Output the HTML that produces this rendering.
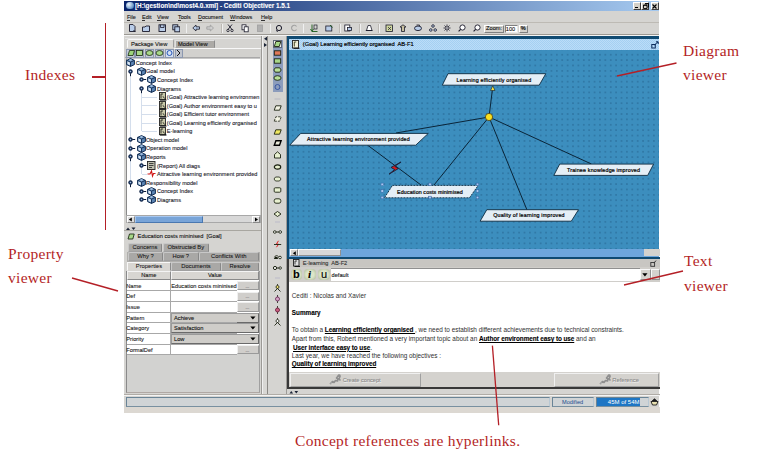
<!DOCTYPE html>
<html><head><meta charset="utf-8"><style>
html,body{margin:0;padding:0;background:#fff;}
body{width:765px;height:460px;overflow:hidden;position:relative;font-family:"Liberation Sans",sans-serif;}
.a{position:absolute;box-sizing:border-box;}
.ann{position:absolute;font-family:"Liberation Serif",serif;color:#b41f26;font-size:15.5px;line-height:16px;letter-spacing:0.3px;white-space:nowrap;}
.t{position:absolute;white-space:nowrap;color:#111;-webkit-text-stroke:0.1px currentColor;}
.r{border:1px solid;border-color:#fff #808080 #808080 #fff;}
.s{border:1px solid;border-color:#808080 #fff #fff #808080;}
</style></head><body>
<div class="a" style="left:124px;top:1px;width:535px;height:412px;background:#d5d4d1;"></div>
<div class="a" style="left:124px;top:1px;width:535px;height:9.5px;background:linear-gradient(90deg,#0a246a 0%,#a6caf0 100%);"></div>
<div class="a" style="left:125.5px;top:2px;width:8px;height:7px;border-radius:4px;background:radial-gradient(circle at 35% 35%,#f0f8ff,#5a8cc0 75%);"></div>
<div class="t" style="left:135px;top:1.99px;font-size:6.35px;line-height:7.62px;color:#fff;font-weight:bold;">[H:\gestion\nd\most4.0.xml] - Cediti Objectiver 1.5.1</div>
<div class="a" style="left:632.5px;top:2px;width:8px;height:7.5px;background:#d4d0c8;border:1px solid;border-color:#fff #404040 #404040 #fff;"></div>
<div class="a" style="left:641px;top:2px;width:8px;height:7.5px;background:#d4d0c8;border:1px solid;border-color:#fff #404040 #404040 #fff;"></div>
<div class="a" style="left:650.5px;top:2px;width:8px;height:7.5px;background:#d4d0c8;border:1px solid;border-color:#fff #404040 #404040 #fff;"></div>
<div class="a" style="left:634.5px;top:6.5px;width:3px;height:1.2px;background:#000;"></div>
<svg class="a" style="left:642.5px;top:3px" width="6" height="6"><path d="M2 0.5H5.5V4H4.5M0.5 2H4V5.5H0.5Z" fill="none" stroke="#000" stroke-width="0.9"/><path d="M2 0.9H5.5M0.5 2.4H4" stroke="#000" stroke-width="0.8"/></svg>
<svg class="a" style="left:652px;top:3.5px" width="5" height="5"><path d="M0.5 0.5L4.5 4.5M4.5 0.5L0.5 4.5" stroke="#000" stroke-width="1.1"/></svg>
<div class="t" style="left:127px;top:13.60px;font-size:5.5px;line-height:6.60px;">File</div>
<div class="a" style="left:127.2px;top:19.6px;width:3px;height:0.7px;background:#333;"></div>
<div class="t" style="left:142px;top:13.60px;font-size:5.5px;line-height:6.60px;">Edit</div>
<div class="a" style="left:142.2px;top:19.6px;width:3.2px;height:0.7px;background:#333;"></div>
<div class="t" style="left:157px;top:13.60px;font-size:5.5px;line-height:6.60px;">View</div>
<div class="a" style="left:157.2px;top:19.6px;width:3.8px;height:0.7px;background:#333;"></div>
<div class="t" style="left:178px;top:13.60px;font-size:5.5px;line-height:6.60px;">Tools</div>
<div class="a" style="left:178.2px;top:19.6px;width:3.2px;height:0.7px;background:#333;"></div>
<div class="t" style="left:198px;top:13.60px;font-size:5.5px;line-height:6.60px;">Document</div>
<div class="a" style="left:198.2px;top:19.6px;width:4px;height:0.7px;background:#333;"></div>
<div class="t" style="left:230px;top:13.60px;font-size:5.5px;line-height:6.60px;">Windows</div>
<div class="a" style="left:230.2px;top:19.6px;width:5px;height:0.7px;background:#333;"></div>
<div class="t" style="left:261px;top:13.60px;font-size:5.5px;line-height:6.60px;">Help</div>
<div class="a" style="left:261.2px;top:19.6px;width:3.8px;height:0.7px;background:#333;"></div>
<div class="a" style="left:124px;top:21.5px;width:535px;height:0.8px;background:#bdbab4;"></div>
<div class="a" style="left:124px;top:34.3px;width:535px;height:1px;background:#9c9993;"></div>
<div class="a" style="left:124px;top:35.3px;width:535px;height:0.8px;background:#f4f4f4;"></div>
<div class="a" style="left:127px;top:38.7px;width:47px;height:9.3px;background:#dcdad6;border:1px solid;border-color:#fafafa #a0a0a0 transparent #fafafa;border-radius:2px 2px 0 0;"></div>
<div class="t" style="left:131px;top:41.15px;font-size:5.75px;line-height:6.90px;">Package View</div>
<div class="a" style="left:174.5px;top:40px;width:40.5px;height:8px;background:#acaaa6;border:1px solid;border-color:#e0e0e0 #8c8c8c transparent #e0e0e0;"></div>
<div class="t" style="left:178px;top:41.45px;font-size:5.75px;line-height:6.90px;">Model View</div>
<div class="a" style="left:125px;top:48.5px;width:136px;height:9.2px;background:#d2d1ce;border-bottom:0.8px solid #a8a8a8;"></div>
<div class="a" style="left:174px;top:47.6px;width:87px;height:0.9px;background:#f8f8f8;"></div>
<div class="a" style="left:125px;top:38.2px;width:137px;height:0.8px;background:#e4e4e4;"></div>
<div class="a" style="left:126px;top:48.8px;width:9px;height:8.8px;background:#c4ccd8;border:1px solid #8c98b0;"></div>
<div class="a" style="left:135px;top:48.8px;width:9px;height:8.8px;background:#c4ccd8;border:1px solid #8c98b0;"></div>
<div class="a" style="left:144.5px;top:48.8px;width:9px;height:8.8px;background:#c4ccd8;border:1px solid #8c98b0;"></div>
<div class="a" style="left:154.5px;top:48.8px;width:9px;height:8.8px;background:#c4ccd8;border:1px solid #8c98b0;"></div>
<div class="a" style="left:164.5px;top:48.8px;width:9px;height:8.8px;background:#d4e0f2;border:1px solid #8c98b0;"></div>
<div class="a" style="left:175px;top:48.8px;width:8px;height:8.8px;background:#c0c4cc;border:1px solid #8c98b0;"></div>
<svg class="a" style="left:125px;top:48px" width="60" height="10"><path d="M3 7.5L4.5 2.5H9.5L8 7.5Z" fill="#9cd47c" stroke="#1a2a10" stroke-width="0.8"/><rect x="11.5" y="2.5" width="6" height="5" fill="#a8d888" stroke="#1a2a10" stroke-width="0.8"/><ellipse cx="24.5" cy="5" rx="3.5" ry="2.5" fill="#a8d888" stroke="#1a2a10" stroke-width="0.8"/><ellipse cx="34.5" cy="5" rx="3.5" ry="2.5" fill="#a8d888" stroke="#1a2a10" stroke-width="0.8"/><circle cx="44.5" cy="5" r="2.5" fill="none" stroke="#2a58b8" stroke-width="1"/><path d="M52 2L55 5L52 8" fill="none" stroke="#111" stroke-width="1"/></svg>
<div class="a" style="left:125.5px;top:57.5px;width:135px;height:158px;background:#fff;border-left:1px solid #8a8a8a;border-top:1px solid #c8c8c8;"></div>
<div class="a" style="left:130.4px;top:75px;width:0.8px;height:110px;background:#d4deec;"></div>
<div class="a" style="left:141.2px;top:92px;width:0.8px;height:39px;background:#d4deec;"></div>
<div class="a" style="left:141.2px;top:160px;width:0.8px;height:14px;background:#d4deec;"></div>
<div class="a" style="left:141.5px;top:96.85px;width:15px;height:0.8px;background:#d4deec;"></div>
<div class="a" style="left:141.5px;top:105.4125px;width:15px;height:0.8px;background:#d4deec;"></div>
<div class="a" style="left:141.5px;top:113.975px;width:15px;height:0.8px;background:#d4deec;"></div>
<div class="a" style="left:141.5px;top:122.5375px;width:15px;height:0.8px;background:#d4deec;"></div>
<div class="a" style="left:141.5px;top:131.1px;width:15px;height:0.8px;background:#d4deec;"></div>
<div class="a" style="left:141.5px;top:173.9125px;width:5px;height:0.8px;background:#d4deec;"></div>
<svg class="a" style="left:126.3px;top:58.1px" width="9" height="9"><path d="M4.5 0.6L8.4 2.4V6.6L4.5 8.4L0.6 6.6V2.4Z" fill="#5a84b4" stroke="#102a50" stroke-width="1"/><path d="M0.6 2.4L4.5 4.2L8.4 2.4M4.5 4.2V8.4" fill="none" stroke="#102a50" stroke-width="0.9"/><path d="M1.4 3.3L3.9 4.5V7.2L1.4 6Z" fill="#dce8f4"/><path d="M2.5 1.9L4.5 1L6.5 1.9L4.5 2.9Z" fill="#a8c4e4"/></svg>
<svg class="a" style="left:128.3px;top:68.6625px" width="5" height="8"><circle cx="2.5" cy="2.5" r="1.9" fill="#1e3c68" stroke="#0a1a38" stroke-width="0.6"/><circle cx="2.5" cy="2.5" r="0.7" fill="#a8c0e0"/><path d="M2.5 4.3V7.2" stroke="#0a1a38" stroke-width="1"/></svg>
<svg class="a" style="left:137px;top:66.6625px" width="9" height="9"><path d="M4.5 0.6L8.4 2.4V6.6L4.5 8.4L0.6 6.6V2.4Z" fill="#5a84b4" stroke="#102a50" stroke-width="1"/><path d="M0.6 2.4L4.5 4.2L8.4 2.4M4.5 4.2V8.4" fill="none" stroke="#102a50" stroke-width="0.9"/><path d="M1.4 3.3L3.9 4.5V7.2L1.4 6Z" fill="#dce8f4"/><path d="M2.5 1.9L4.5 1L6.5 1.9L4.5 2.9Z" fill="#a8c4e4"/></svg>
<svg class="a" style="left:138.9px;top:77.225px" width="8" height="5"><circle cx="2.5" cy="2.5" r="1.9" fill="#1e3c68" stroke="#0a1a38" stroke-width="0.6"/><circle cx="2.5" cy="2.5" r="0.7" fill="#a8c0e0"/><path d="M4.3 2.5H7.2" stroke="#0a1a38" stroke-width="1"/></svg>
<svg class="a" style="left:147px;top:75.225px" width="9" height="9"><path d="M4.5 0.6L8.4 2.4V6.6L4.5 8.4L0.6 6.6V2.4Z" fill="#5a84b4" stroke="#102a50" stroke-width="1"/><path d="M0.6 2.4L4.5 4.2L8.4 2.4M4.5 4.2V8.4" fill="none" stroke="#102a50" stroke-width="0.9"/><path d="M1.4 3.3L3.9 4.5V7.2L1.4 6Z" fill="#dce8f4"/><path d="M2.5 1.9L4.5 1L6.5 1.9L4.5 2.9Z" fill="#a8c4e4"/></svg>
<svg class="a" style="left:138.9px;top:85.7875px" width="5" height="8"><circle cx="2.5" cy="2.5" r="1.9" fill="#1e3c68" stroke="#0a1a38" stroke-width="0.6"/><circle cx="2.5" cy="2.5" r="0.7" fill="#a8c0e0"/><path d="M2.5 4.3V7.2" stroke="#0a1a38" stroke-width="1"/></svg>
<svg class="a" style="left:147px;top:83.7875px" width="9" height="9"><path d="M4.5 0.6L8.4 2.4V6.6L4.5 8.4L0.6 6.6V2.4Z" fill="#5a84b4" stroke="#102a50" stroke-width="1"/><path d="M0.6 2.4L4.5 4.2L8.4 2.4M4.5 4.2V8.4" fill="none" stroke="#102a50" stroke-width="0.9"/><path d="M1.4 3.3L3.9 4.5V7.2L1.4 6Z" fill="#dce8f4"/><path d="M2.5 1.9L4.5 1L6.5 1.9L4.5 2.9Z" fill="#a8c4e4"/></svg>
<svg class="a" style="left:158.5px;top:92.35px" width="8" height="9"><rect x="0.5" y="0.5" width="6" height="7.2" fill="#c8c8a8" stroke="#222" stroke-width="0.9"/><path d="M2 2V6.5M2 2H4M4 4.3L5.5 6.5" stroke="#111" stroke-width="0.8" fill="none"/><path d="M1 8H7.5" stroke="#000" stroke-width="1"/></svg>
<svg class="a" style="left:158.5px;top:100.9125px" width="8" height="9"><rect x="0.5" y="0.5" width="6" height="7.2" fill="#c8c8a8" stroke="#222" stroke-width="0.9"/><path d="M2 2V6.5M2 2H4M4 4.3L5.5 6.5" stroke="#111" stroke-width="0.8" fill="none"/><path d="M1 8H7.5" stroke="#000" stroke-width="1"/></svg>
<svg class="a" style="left:158.5px;top:109.475px" width="8" height="9"><rect x="0.5" y="0.5" width="6" height="7.2" fill="#c8c8a8" stroke="#222" stroke-width="0.9"/><path d="M2 2V6.5M2 2H4M4 4.3L5.5 6.5" stroke="#111" stroke-width="0.8" fill="none"/><path d="M1 8H7.5" stroke="#000" stroke-width="1"/></svg>
<svg class="a" style="left:158.5px;top:118.0375px" width="8" height="9"><rect x="0.5" y="0.5" width="6" height="7.2" fill="#c8c8a8" stroke="#222" stroke-width="0.9"/><path d="M2 2V6.5M2 2H4M4 4.3L5.5 6.5" stroke="#111" stroke-width="0.8" fill="none"/><path d="M1 8H7.5" stroke="#000" stroke-width="1"/></svg>
<svg class="a" style="left:158.5px;top:126.6px" width="8" height="9"><rect x="0.5" y="0.5" width="6" height="7.2" fill="#c8c8a8" stroke="#222" stroke-width="0.9"/><path d="M2 2V6.5M2 2H4M4 4.3L5.5 6.5" stroke="#111" stroke-width="0.8" fill="none"/><path d="M1 8H7.5" stroke="#000" stroke-width="1"/></svg>
<svg class="a" style="left:128.3px;top:137.1625px" width="8" height="5"><circle cx="2.5" cy="2.5" r="1.9" fill="#1e3c68" stroke="#0a1a38" stroke-width="0.6"/><circle cx="2.5" cy="2.5" r="0.7" fill="#a8c0e0"/><path d="M4.3 2.5H7.2" stroke="#0a1a38" stroke-width="1"/></svg>
<svg class="a" style="left:137px;top:135.1625px" width="9" height="9"><path d="M4.5 0.6L8.4 2.4V6.6L4.5 8.4L0.6 6.6V2.4Z" fill="#5a84b4" stroke="#102a50" stroke-width="1"/><path d="M0.6 2.4L4.5 4.2L8.4 2.4M4.5 4.2V8.4" fill="none" stroke="#102a50" stroke-width="0.9"/><path d="M1.4 3.3L3.9 4.5V7.2L1.4 6Z" fill="#dce8f4"/><path d="M2.5 1.9L4.5 1L6.5 1.9L4.5 2.9Z" fill="#a8c4e4"/></svg>
<svg class="a" style="left:128.3px;top:145.725px" width="8" height="5"><circle cx="2.5" cy="2.5" r="1.9" fill="#1e3c68" stroke="#0a1a38" stroke-width="0.6"/><circle cx="2.5" cy="2.5" r="0.7" fill="#a8c0e0"/><path d="M4.3 2.5H7.2" stroke="#0a1a38" stroke-width="1"/></svg>
<svg class="a" style="left:137px;top:143.725px" width="9" height="9"><path d="M4.5 0.6L8.4 2.4V6.6L4.5 8.4L0.6 6.6V2.4Z" fill="#5a84b4" stroke="#102a50" stroke-width="1"/><path d="M0.6 2.4L4.5 4.2L8.4 2.4M4.5 4.2V8.4" fill="none" stroke="#102a50" stroke-width="0.9"/><path d="M1.4 3.3L3.9 4.5V7.2L1.4 6Z" fill="#dce8f4"/><path d="M2.5 1.9L4.5 1L6.5 1.9L4.5 2.9Z" fill="#a8c4e4"/></svg>
<svg class="a" style="left:128.3px;top:154.2875px" width="5" height="8"><circle cx="2.5" cy="2.5" r="1.9" fill="#1e3c68" stroke="#0a1a38" stroke-width="0.6"/><circle cx="2.5" cy="2.5" r="0.7" fill="#a8c0e0"/><path d="M2.5 4.3V7.2" stroke="#0a1a38" stroke-width="1"/></svg>
<svg class="a" style="left:137px;top:152.2875px" width="9" height="9"><path d="M4.5 0.6L8.4 2.4V6.6L4.5 8.4L0.6 6.6V2.4Z" fill="#5a84b4" stroke="#102a50" stroke-width="1"/><path d="M0.6 2.4L4.5 4.2L8.4 2.4M4.5 4.2V8.4" fill="none" stroke="#102a50" stroke-width="0.9"/><path d="M1.4 3.3L3.9 4.5V7.2L1.4 6Z" fill="#dce8f4"/><path d="M2.5 1.9L4.5 1L6.5 1.9L4.5 2.9Z" fill="#a8c4e4"/></svg>
<svg class="a" style="left:138.9px;top:162.85px" width="8" height="5"><circle cx="2.5" cy="2.5" r="1.9" fill="#1e3c68" stroke="#0a1a38" stroke-width="0.6"/><circle cx="2.5" cy="2.5" r="0.7" fill="#a8c0e0"/><path d="M4.3 2.5H7.2" stroke="#0a1a38" stroke-width="1"/></svg>
<svg class="a" style="left:147px;top:160.85px" width="9" height="9"><rect x="0.5" y="0.5" width="7.5" height="8" fill="#c0c0b0" stroke="#222" stroke-width="0.9"/><path d="M2 2.5H6.5M2 4.5H6.5M2 6.5H5" stroke="#222" stroke-width="0.8"/></svg>
<svg class="a" style="left:147px;top:169.4125px" width="9" height="9"><path d="M0.5 5H3L4.5 2L5.5 7L6.5 4.5H8.5" stroke="#d01818" stroke-width="1.2" fill="none"/></svg>
<svg class="a" style="left:128.3px;top:179.975px" width="5" height="8"><circle cx="2.5" cy="2.5" r="1.9" fill="#1e3c68" stroke="#0a1a38" stroke-width="0.6"/><circle cx="2.5" cy="2.5" r="0.7" fill="#a8c0e0"/><path d="M2.5 4.3V7.2" stroke="#0a1a38" stroke-width="1"/></svg>
<svg class="a" style="left:137px;top:177.975px" width="9" height="9"><path d="M4.5 0.6L8.4 2.4V6.6L4.5 8.4L0.6 6.6V2.4Z" fill="#5a84b4" stroke="#102a50" stroke-width="1"/><path d="M0.6 2.4L4.5 4.2L8.4 2.4M4.5 4.2V8.4" fill="none" stroke="#102a50" stroke-width="0.9"/><path d="M1.4 3.3L3.9 4.5V7.2L1.4 6Z" fill="#dce8f4"/><path d="M2.5 1.9L4.5 1L6.5 1.9L4.5 2.9Z" fill="#a8c4e4"/></svg>
<svg class="a" style="left:138.9px;top:188.5375px" width="8" height="5"><circle cx="2.5" cy="2.5" r="1.9" fill="#1e3c68" stroke="#0a1a38" stroke-width="0.6"/><circle cx="2.5" cy="2.5" r="0.7" fill="#a8c0e0"/><path d="M4.3 2.5H7.2" stroke="#0a1a38" stroke-width="1"/></svg>
<svg class="a" style="left:147px;top:186.5375px" width="9" height="9"><path d="M4.5 0.6L8.4 2.4V6.6L4.5 8.4L0.6 6.6V2.4Z" fill="#5a84b4" stroke="#102a50" stroke-width="1"/><path d="M0.6 2.4L4.5 4.2L8.4 2.4M4.5 4.2V8.4" fill="none" stroke="#102a50" stroke-width="0.9"/><path d="M1.4 3.3L3.9 4.5V7.2L1.4 6Z" fill="#dce8f4"/><path d="M2.5 1.9L4.5 1L6.5 1.9L4.5 2.9Z" fill="#a8c4e4"/></svg>
<svg class="a" style="left:138.9px;top:197.1px" width="8" height="5"><circle cx="2.5" cy="2.5" r="1.9" fill="#1e3c68" stroke="#0a1a38" stroke-width="0.6"/><circle cx="2.5" cy="2.5" r="0.7" fill="#a8c0e0"/><path d="M4.3 2.5H7.2" stroke="#0a1a38" stroke-width="1"/></svg>
<svg class="a" style="left:147px;top:195.1px" width="9" height="9"><path d="M4.5 0.6L8.4 2.4V6.6L4.5 8.4L0.6 6.6V2.4Z" fill="#5a84b4" stroke="#102a50" stroke-width="1"/><path d="M0.6 2.4L4.5 4.2L8.4 2.4M4.5 4.2V8.4" fill="none" stroke="#102a50" stroke-width="0.9"/><path d="M1.4 3.3L3.9 4.5V7.2L1.4 6Z" fill="#dce8f4"/><path d="M2.5 1.9L4.5 1L6.5 1.9L4.5 2.9Z" fill="#a8c4e4"/></svg>
<div class="t" style="left:135.7px;top:59.83px;font-size:5.62px;line-height:6.74px;color:#1c1c2c;">Concept Index</div>
<div class="t" style="left:146px;top:68.39px;font-size:5.62px;line-height:6.74px;color:#1c1c2c;">Goal model</div>
<div class="t" style="left:157px;top:76.95px;font-size:5.62px;line-height:6.74px;color:#1c1c2c;">Concept Index</div>
<div class="t" style="left:157px;top:85.52px;font-size:5.62px;line-height:6.74px;color:#1c1c2c;">Diagrams</div>
<div class="t" style="left:166.8px;top:94.08px;font-size:5.62px;line-height:6.74px;color:#1c1c2c;">(Goal) Attractive learning environmen</div>
<div class="t" style="left:166.8px;top:102.64px;font-size:5.62px;line-height:6.74px;color:#1c1c2c;">(Goal) Author environment easy to u</div>
<div class="t" style="left:166.8px;top:111.20px;font-size:5.62px;line-height:6.74px;color:#1c1c2c;">(Goal) Efficient tutor environment</div>
<div class="t" style="left:166.8px;top:119.77px;font-size:5.62px;line-height:6.74px;color:#1c1c2c;">(Goal) Learning efficiently organised</div>
<div class="t" style="left:166.8px;top:128.33px;font-size:5.62px;line-height:6.74px;color:#1c1c2c;">E-learning</div>
<div class="t" style="left:146px;top:136.89px;font-size:5.62px;line-height:6.74px;color:#1c1c2c;">Object model</div>
<div class="t" style="left:146px;top:145.45px;font-size:5.62px;line-height:6.74px;color:#1c1c2c;">Operation model</div>
<div class="t" style="left:146px;top:154.02px;font-size:5.62px;line-height:6.74px;color:#1c1c2c;">Reports</div>
<div class="t" style="left:157px;top:162.58px;font-size:5.62px;line-height:6.74px;color:#1c1c2c;">(Report) All diags</div>
<div class="t" style="left:157px;top:171.14px;font-size:5.62px;line-height:6.74px;color:#1c1c2c;">Attractive learning environment provided</div>
<div class="t" style="left:146px;top:179.70px;font-size:5.62px;line-height:6.74px;color:#1c1c2c;">Responsibility model</div>
<div class="t" style="left:157px;top:188.27px;font-size:5.62px;line-height:6.74px;color:#1c1c2c;">Concept Index</div>
<div class="t" style="left:157px;top:196.83px;font-size:5.62px;line-height:6.74px;color:#1c1c2c;">Diagrams</div>
<div class="a" style="left:260px;top:57px;width:2px;height:160px;background:#d5d4d1;"></div>
<div class="a" style="left:125.5px;top:215.3px;width:135px;height:8px;background:#d8d8d8;border:1px solid #a8a8a8;"></div>
<div class="a" style="left:126.5px;top:216px;width:8px;height:6.7px;background:#dcdcdc;border:1px solid;border-color:#fff #888 #888 #fff;"></div>
<svg class="a" style="left:128px;top:217px" width="5" height="5"><path d="M3.8 0.5V4.5L0.8 2.5Z" fill="#000"/></svg>
<div class="a" style="left:134.5px;top:216px;width:68px;height:6.7px;background:#78a4d8;border:1px solid;border-color:#a8c8f0 #4a78b0 #4a78b0 #a8c8f0;"></div>
<div class="a" style="left:252px;top:216px;width:8px;height:6.7px;background:#dcdcdc;border:1px solid;border-color:#fff #888 #888 #fff;"></div>
<svg class="a" style="left:254px;top:217px" width="5" height="5"><path d="M1 0.5V4.5L4 2.5Z" fill="#000"/></svg>
<svg class="a" style="left:125px;top:225.5px" width="12" height="5"><path d="M1 4L3 1.5L5 4Z" fill="#1a2234"/><path d="M6.5 1.5L8.5 4L10.5 1.5Z" fill="#1a2234"/></svg>
<div class="a" style="left:124px;top:230.3px;width:137px;height:0.8px;background:#a8a6a0;"></div>
<svg class="a" style="left:126.5px;top:233px" width="8" height="7"><path d="M1 6L2.5 1H7.2L5.8 6Z" fill="#a8d888" stroke="#203018" stroke-width="0.9"/></svg>
<div class="t" style="left:137.6px;top:232.98px;font-size:5.7px;line-height:6.84px;">Education costs mininised&nbsp; [Goal]</div>
<div class="a" style="left:128px;top:242.5px;width:34px;height:9.300000000000011px;background:#a9a8a6;border:1px solid;border-color:#c8c8c8 #888888 #a0a0a0 #c8c8c8;border-radius:2px 2px 0 0;"></div>
<div class="t" style="left:45.0px;width:200px;text-align:center;top:243.87px;font-size:5.8px;line-height:6.96px;-webkit-text-stroke:0.05px #111;color:#111;">Concerns</div>
<div class="a" style="left:162.5px;top:242.5px;width:46.5px;height:9.300000000000011px;background:#a9a8a6;border:1px solid;border-color:#c8c8c8 #888888 #a0a0a0 #c8c8c8;border-radius:2px 2px 0 0;"></div>
<div class="t" style="left:85.75px;width:200px;text-align:center;top:243.87px;font-size:5.8px;line-height:6.96px;-webkit-text-stroke:0.05px #111;color:#111;">Obstructed By</div>
<div class="a" style="left:127px;top:251.5px;width:132.5px;height:10px;background:#b0afac;"></div>
<div class="a" style="left:128px;top:251.8px;width:35px;height:9.699999999999989px;background:#a9a8a6;border:1px solid;border-color:#c8c8c8 #888888 #a0a0a0 #c8c8c8;border-radius:2px 2px 0 0;"></div>
<div class="t" style="left:45.5px;width:200px;text-align:center;top:253.37px;font-size:5.8px;line-height:6.96px;-webkit-text-stroke:0.05px #111;color:#111;">Why ?</div>
<div class="a" style="left:163px;top:251.8px;width:35.5px;height:9.699999999999989px;background:#a9a8a6;border:1px solid;border-color:#c8c8c8 #888888 #a0a0a0 #c8c8c8;border-radius:2px 2px 0 0;"></div>
<div class="t" style="left:80.75px;width:200px;text-align:center;top:253.37px;font-size:5.8px;line-height:6.96px;-webkit-text-stroke:0.05px #111;color:#111;">How ?</div>
<div class="a" style="left:198.5px;top:251.8px;width:60.5px;height:9.699999999999989px;background:#a9a8a6;border:1px solid;border-color:#c8c8c8 #888888 #a0a0a0 #c8c8c8;border-radius:2px 2px 0 0;"></div>
<div class="t" style="left:128.75px;width:200px;text-align:center;top:253.37px;font-size:5.8px;line-height:6.96px;-webkit-text-stroke:0.05px #111;color:#111;">Conflicts With</div>
<div class="a" style="left:171px;top:261.5px;width:50px;height:9.699999999999989px;background:#a9a8a6;border:1px solid;border-color:#c8c8c8 #888888 #a0a0a0 #c8c8c8;border-radius:2px 2px 0 0;"></div>
<div class="t" style="left:96.0px;width:200px;text-align:center;top:263.07px;font-size:5.8px;line-height:6.96px;-webkit-text-stroke:0.05px #111;color:#111;">Documents</div>
<div class="a" style="left:221px;top:261.5px;width:38px;height:9.699999999999989px;background:#a9a8a6;border:1px solid;border-color:#c8c8c8 #888888 #a0a0a0 #c8c8c8;border-radius:2px 2px 0 0;"></div>
<div class="t" style="left:140.0px;width:200px;text-align:center;top:263.07px;font-size:5.8px;line-height:6.96px;-webkit-text-stroke:0.05px #111;color:#111;">Resolve</div>
<div class="a" style="left:127px;top:261.8px;width:44px;height:9.699999999999989px;background:#d8d6d2;border:1px solid;border-color:#f8f8f8 #8c8c8c transparent #f8f8f8;"></div>
<div class="t" style="left:49.0px;width:200px;text-align:center;top:263.37px;font-size:5.8px;line-height:6.96px;-webkit-text-stroke:0.05px #111;color:#111;">Properties</div>
<div class="a" style="left:126px;top:271.2px;width:133.5px;height:121.6px;background:#d2d2d0;border:1px solid;border-color:#8a8a8a #a0a0a0 #b0a8a4 #8a8a8a;"></div>
<div class="a" style="left:127px;top:271.3px;width:43.7px;height:8.6px;background:#d8d6d2;border:1px solid;border-color:#f4f4f4 #8a8a8a #8a8a8a #f4f4f4;"></div>
<div class="t" style="left:48.80000000000001px;width:200px;text-align:center;top:272.24px;font-size:5.6px;line-height:6.72px;">Name</div>
<div class="a" style="left:170.7px;top:271.3px;width:88.3px;height:8.6px;background:#d8d6d2;border:1px solid;border-color:#f4f4f4 #8a8a8a #8a8a8a #f4f4f4;"></div>
<div class="t" style="left:115px;width:200px;text-align:center;top:272.24px;font-size:5.6px;line-height:6.72px;">Value</div>
<div class="a" style="left:127px;top:279.9px;width:132px;height:74.60000000000002px;background:#fff;"></div>
<div class="t" style="left:126.3px;top:282.66px;font-size:5.65px;line-height:6.78px;color:#1a1a1a;">Name</div>
<div class="a" style="left:236.7px;top:280.79999999999995px;width:22.3px;height:9.500000000000046px;background:#d0cecb;border:1px solid;border-color:#f0f0f0 #9a9a9a #9a9a9a #f0f0f0;"></div>
<div class="t" style="left:245.5px;top:283.75px;font-size:4.5px;line-height:5.40px;color:#777;">...</div>
<div class="t" style="left:171.3px;top:282.65px;font-size:5.66px;line-height:6.79px;color:#1a1a1a;">Education costs mininised</div>
<div class="t" style="left:126.3px;top:293.31px;font-size:5.65px;line-height:6.78px;color:#1a1a1a;">Def</div>
<div class="a" style="left:236.7px;top:291.5px;width:22.3px;height:9.399999999999967px;background:#d0cecb;border:1px solid;border-color:#f0f0f0 #9a9a9a #9a9a9a #f0f0f0;"></div>
<div class="t" style="left:245.5px;top:294.40px;font-size:4.5px;line-height:5.40px;color:#777;">...</div>
<div class="t" style="left:126.3px;top:303.96px;font-size:5.65px;line-height:6.78px;color:#1a1a1a;">Issue</div>
<div class="a" style="left:236.7px;top:302.09999999999997px;width:22.3px;height:9.49999999999999px;background:#d0cecb;border:1px solid;border-color:#f0f0f0 #9a9a9a #9a9a9a #f0f0f0;"></div>
<div class="t" style="left:245.5px;top:305.05px;font-size:4.5px;line-height:5.40px;color:#777;">...</div>
<div class="t" style="left:126.3px;top:314.61px;font-size:5.65px;line-height:6.78px;color:#1a1a1a;">Pattern</div>
<div class="a" style="left:171px;top:312.5px;width:88px;height:10.000000000000023px;background:#cfcdc9;border:1px solid;border-color:#9a9a9a #6a6a6a #6a6a6a #9a9a9a;"></div>
<div class="t" style="left:174px;top:314.58px;font-size:5.7px;line-height:6.84px;">Achieve</div>
<svg class="a" style="left:250px;top:315.7px" width="6" height="4"><path d="M0.3 0.5H5.5L2.9 3.5Z" fill="#000"/></svg>
<div class="t" style="left:126.3px;top:325.26px;font-size:5.65px;line-height:6.78px;color:#1a1a1a;">Category</div>
<div class="a" style="left:171px;top:323.1px;width:88px;height:10.099999999999989px;background:#cfcdc9;border:1px solid;border-color:#9a9a9a #6a6a6a #6a6a6a #9a9a9a;"></div>
<div class="t" style="left:174px;top:325.23px;font-size:5.7px;line-height:6.84px;">Satisfaction</div>
<svg class="a" style="left:250px;top:326.35px" width="6" height="4"><path d="M0.3 0.5H5.5L2.9 3.5Z" fill="#000"/></svg>
<div class="t" style="left:126.3px;top:335.96px;font-size:5.65px;line-height:6.78px;color:#1a1a1a;">Priority</div>
<div class="a" style="left:171px;top:333.8px;width:88px;height:10.099999999999989px;background:#cfcdc9;border:1px solid;border-color:#9a9a9a #6a6a6a #6a6a6a #9a9a9a;"></div>
<div class="t" style="left:174px;top:335.93px;font-size:5.7px;line-height:6.84px;">Low</div>
<svg class="a" style="left:250px;top:337.04999999999995px" width="6" height="4"><path d="M0.3 0.5H5.5L2.9 3.5Z" fill="#000"/></svg>
<div class="t" style="left:126.3px;top:346.61px;font-size:5.65px;line-height:6.78px;color:#1a1a1a;">FormalDef</div>
<div class="a" style="left:236.7px;top:344.79999999999995px;width:22.3px;height:9.400000000000023px;background:#d0cecb;border:1px solid;border-color:#f0f0f0 #9a9a9a #9a9a9a #f0f0f0;"></div>
<div class="t" style="left:245.5px;top:347.70px;font-size:4.5px;line-height:5.40px;color:#777;">...</div>
<div class="a" style="left:127px;top:290.40000000000003px;width:110px;height:0.9px;background:#a8a8a8;"></div>
<div class="a" style="left:127px;top:301.0px;width:110px;height:0.9px;background:#a8a8a8;"></div>
<div class="a" style="left:127px;top:311.7px;width:110px;height:0.9px;background:#a8a8a8;"></div>
<div class="a" style="left:127px;top:322.3px;width:110px;height:0.9px;background:#a8a8a8;"></div>
<div class="a" style="left:127px;top:333.0px;width:110px;height:0.9px;background:#a8a8a8;"></div>
<div class="a" style="left:127px;top:343.7px;width:110px;height:0.9px;background:#a8a8a8;"></div>
<div class="a" style="left:127px;top:354.3px;width:110px;height:0.9px;background:#a8a8a8;"></div>
<div class="a" style="left:170.4px;top:279.9px;width:0.9px;height:74.60000000000002px;background:#a8a8a8;"></div>
<div class="a" style="left:261.3px;top:36px;width:0.8px;height:358px;background:#9c9a96;"></div>
<svg class="a" style="left:128px;top:24px" width="8" height="8.5"><path d="M1.5 0.5H5L7 2.5V7.5H1.5Z" fill="#b8cce8" stroke="#1a1a2a" stroke-width="0.9"/><path d="M5.5 6L7.5 8" stroke="#1a1a2a" stroke-width="1"/></svg>
<svg class="a" style="left:142.4px;top:24px" width="8" height="8.5"><path d="M0.5 3H3L4 2H7.5V7.5H0.5Z" fill="#b8cce8" stroke="#1a1a2a" stroke-width="0.9"/></svg>
<svg class="a" style="left:157.5px;top:24px" width="8" height="8.5"><rect x="1" y="0.8" width="6.5" height="6.7" fill="#b8cce8" stroke="#1a1a2a" stroke-width="0.9"/><path d="M2.5 0.8V3.5H6V0.8" fill="none" stroke="#1a1a2a" stroke-width="0.8"/></svg>
<svg class="a" style="left:171.6px;top:24px" width="8" height="8.5"><rect x="0.8" y="0.8" width="5" height="5" fill="#b8cce8" stroke="#1a1a2a" stroke-width="0.9"/><rect x="2.8" y="2.8" width="5" height="5" fill="#b8cce8" stroke="#1a1a2a" stroke-width="0.9"/></svg>
<svg class="a" style="left:192px;top:24px" width="8" height="8.5"><path d="M0.8 4L4 1V2.8H7.5V5.2H4V7Z" fill="#b8cce8" stroke="#1a1a2a" stroke-width="0.8"/></svg>
<svg class="a" style="left:206.4px;top:24px" width="8" height="8.5"><path d="M7.5 4L4.3 1V2.8H0.8V5.2H4.3V7Z" fill="#d0d0d0" stroke="#9a9a9a" stroke-width="0.8"/></svg>
<svg class="a" style="left:226px;top:24px" width="8" height="8.5"><path d="M2 0.5L6 5.5M6 0.5L2 5.5" stroke="#1a1a2a" stroke-width="0.9"/><circle cx="2" cy="6.5" r="1.2" fill="none" stroke="#1a1a2a" stroke-width="0.8"/><circle cx="6" cy="6.5" r="1.2" fill="none" stroke="#1a1a2a" stroke-width="0.8"/></svg>
<svg class="a" style="left:241px;top:24px" width="8" height="8.5"><rect x="1" y="0.8" width="4" height="5" fill="#fff" stroke="#1a1a2a" stroke-width="0.8"/><rect x="3.2" y="2.8" width="4" height="5" fill="#fff" stroke="#1a1a2a" stroke-width="0.8"/></svg>
<svg class="a" style="left:255.60000000000002px;top:24px" width="8" height="8.5"><rect x="1.5" y="1" width="5" height="6.5" fill="#b0b0b0" stroke="#a0a0a0" stroke-width="0.8"/></svg>
<svg class="a" style="left:275px;top:24px" width="8" height="8.5"><circle cx="4" cy="4" r="2.6" fill="none" stroke="#1a1a2a" stroke-width="1"/><path d="M1 6.5L3 7.5" stroke="#1a1a2a" stroke-width="0.9"/></svg>
<svg class="a" style="left:290px;top:24px" width="8" height="8.5"><path d="M6.5 2.5A2.7 2.7 0 1 0 6.5 5.5" fill="none" stroke="#a0a0a0" stroke-width="1.1"/></svg>
<svg class="a" style="left:310px;top:24px" width="8" height="8.5"><path d="M2 0.5V6.5M0.5 5L2 7.5L3.5 5M2 7.5H7.5" stroke="#1a5a1a" stroke-width="0.9" fill="none"/><rect x="4" y="1" width="3" height="4" fill="none" stroke="#1a1a2a" stroke-width="0.7"/></svg>
<svg class="a" style="left:324.8px;top:24px" width="8" height="8.5"><rect x="0.8" y="2" width="6" height="5" fill="#b8cce8" stroke="#1a1a2a" stroke-width="0.8"/><path d="M5 1L7.5 3.5" stroke="#1a5a1a" stroke-width="0.9"/></svg>
<svg class="a" style="left:344.4px;top:24px" width="8" height="8.5"><rect x="0.8" y="1" width="5" height="6" fill="#fff" stroke="#1a1a2a" stroke-width="0.8"/><rect x="3.5" y="3.5" width="4" height="3" fill="#b8cce8" stroke="#1a1a2a" stroke-width="0.8"/></svg>
<svg class="a" style="left:364.5px;top:24px" width="8" height="8.5"><path d="M1.5 6.5L3 1.5H5.5L7 6.5Z" fill="#fff" stroke="#1a1a2a" stroke-width="0.8"/><path d="M0.8 6.5H7.5" stroke="#1a1a2a" stroke-width="0.9"/></svg>
<svg class="a" style="left:384.9px;top:24px" width="8" height="8.5"><rect x="1" y="1" width="6.5" height="6.5" fill="#d0d8a0" stroke="#1a1a2a" stroke-width="0.8"/><path d="M3 3L6 6M6 3L3 6" stroke="#1a1a2a" stroke-width="0.7"/></svg>
<svg class="a" style="left:399.3px;top:24px" width="8" height="8.5"><path d="M4 0.8L7 3H5.5V7.5H2.5V3H1Z" fill="#c8c0a0" stroke="#1a1a2a" stroke-width="0.8"/></svg>
<svg class="a" style="left:413.6px;top:24px" width="8" height="8.5"><ellipse cx="4" cy="4.3" rx="3.5" ry="2.3" fill="#b8cce8" stroke="#1a1a2a" stroke-width="0.9"/><path d="M2.5 1H5.5V2" stroke="#1a1a2a" stroke-width="0.8" fill="none"/></svg>
<svg class="a" style="left:428.5px;top:24px" width="8" height="8.5"><circle cx="4" cy="2" r="1.3" fill="#b8cce8" stroke="#1a1a2a" stroke-width="0.8"/><circle cx="1.8" cy="6" r="1.3" fill="#b8cce8" stroke="#1a1a2a" stroke-width="0.8"/><circle cx="6.2" cy="6" r="1.3" fill="#b8cce8" stroke="#1a1a2a" stroke-width="0.8"/></svg>
<svg class="a" style="left:443.2px;top:24px" width="8" height="8.5"><path d="M4 0.5V7.5M0.5 4H7.5M1.5 1.5L6.5 6.5M6.5 1.5L1.5 6.5" stroke="#1a1a2a" stroke-width="0.8"/><circle cx="4" cy="4" r="1.2" fill="#fff" stroke="#1a1a2a" stroke-width="0.6"/></svg>
<svg class="a" style="left:458px;top:24px" width="8" height="8.5"><circle cx="4.5" cy="3.5" r="2.6" fill="#fff" stroke="#1a1a2a" stroke-width="0.9"/><path d="M2.6 5.4L0.6 7.4" stroke="#1a1a2a" stroke-width="1.2"/></svg>
<svg class="a" style="left:472.5px;top:24px" width="8" height="8.5"><circle cx="4.5" cy="3.5" r="2.6" fill="#fff" stroke="#1a1a2a" stroke-width="0.9"/><path d="M2.6 5.4L0.6 7.4" stroke="#1a1a2a" stroke-width="1.2"/></svg>
<div class="a" style="left:185.6px;top:24px;width:0.7px;height:9px;background:#bcb9b4;"></div>
<div class="a" style="left:186.29999999999998px;top:24px;width:0.7px;height:9px;background:#f0f0f0;"></div>
<div class="a" style="left:221px;top:24px;width:0.7px;height:9px;background:#bcb9b4;"></div>
<div class="a" style="left:221.7px;top:24px;width:0.7px;height:9px;background:#f0f0f0;"></div>
<div class="a" style="left:269.6px;top:24px;width:0.7px;height:9px;background:#bcb9b4;"></div>
<div class="a" style="left:270.3px;top:24px;width:0.7px;height:9px;background:#f0f0f0;"></div>
<div class="a" style="left:302.5px;top:24px;width:0.7px;height:9px;background:#bcb9b4;"></div>
<div class="a" style="left:303.2px;top:24px;width:0.7px;height:9px;background:#f0f0f0;"></div>
<div class="a" style="left:339px;top:24px;width:0.7px;height:9px;background:#bcb9b4;"></div>
<div class="a" style="left:339.7px;top:24px;width:0.7px;height:9px;background:#f0f0f0;"></div>
<div class="a" style="left:358.8px;top:24px;width:0.7px;height:9px;background:#bcb9b4;"></div>
<div class="a" style="left:359.5px;top:24px;width:0.7px;height:9px;background:#f0f0f0;"></div>
<div class="a" style="left:378.4px;top:24px;width:0.7px;height:9px;background:#bcb9b4;"></div>
<div class="a" style="left:379.09999999999997px;top:24px;width:0.7px;height:9px;background:#f0f0f0;"></div>
<div class="a" style="left:484px;top:24.6px;width:19.5px;height:8.2px;background:#d4d1cb;border:1px solid;border-color:#fff #808080 #808080 #fff;"></div>
<div class="t" style="left:486px;top:25.38px;font-size:5.7px;line-height:6.84px;">Zoom:</div>
<div class="a" style="left:504.8px;top:24.6px;width:13.2px;height:8.2px;background:#fff;border:1px solid;border-color:#808080 #e8e8e8 #e8e8e8 #808080;"></div>
<div class="t" style="left:505.8px;top:25.54px;font-size:5.6px;line-height:6.72px;">100</div>
<div class="a" style="left:518.7px;top:24.6px;width:9.7px;height:8.2px;background:#d4d1cb;border:1px solid;border-color:#fff #808080 #808080 #fff;"></div>
<div class="t" style="left:520.8px;top:25.44px;font-size:5.6px;line-height:6.72px;font-weight:bold;">%</div>
<div class="a" style="left:262px;top:36px;width:5.5px;height:358px;background:#d8d7d4;border-left:0.8px solid #f0f0f0;"></div>
<svg class="a" style="left:262.5px;top:36px" width="5" height="12"><path d="M4 0.8V4.8L1 2.8Z" fill="#1a2234"/><path d="M1 7V11L4 9Z" fill="#1a2234"/></svg>
<div class="a" style="left:267.2px;top:36px;width:0.9px;height:358px;background:#8a8884;"></div>
<div class="a" style="left:268px;top:36px;width:19px;height:358px;background:#d5d4d1;"></div>
<div class="a" style="left:286.2px;top:36px;width:0.9px;height:358px;background:#9c9a96;"></div>
<div class="a" style="left:272.8px;top:40px;width:10px;height:51.5px;background:#8c9cbc;"></div>
<div class="a" style="left:273.3px;top:40.3px;width:9px;height:7.6px;background:#f4f4f4;border:0.8px solid #606878;"></div>
<svg class="a" style="left:272.7px;top:39.9px" width="9" height="8"><path d="M1.3 6.5L2.8 1.5H7.8L6.3 6.5Z" fill="#a8d888" stroke="#1a2010" stroke-width="0.9"/></svg>
<svg class="a" style="left:272.7px;top:48.8px" width="9" height="8"><rect x="1.3" y="1.8" width="6.4" height="4.4" fill="#e07858" stroke="#1a2010" stroke-width="0.9"/></svg>
<svg class="a" style="left:272.7px;top:57px" width="9" height="8"><rect x="1.3" y="1.8" width="6.4" height="4.4" fill="#a8d888" stroke="#1a2010" stroke-width="0.9"/></svg>
<svg class="a" style="left:272.7px;top:65.8px" width="9" height="8"><path d="M0.8 4L2.3 1.8H6.7L8.2 4L6.7 6.2H2.3Z" fill="#b8e098" stroke="#1a2010" stroke-width="0.9"/></svg>
<svg class="a" style="left:272.7px;top:74.3px" width="9" height="8"><ellipse cx="4.5" cy="4" rx="3.6" ry="2.3" fill="#b8e098" stroke="#1a2010" stroke-width="0.9"/></svg>
<svg class="a" style="left:272.7px;top:83px" width="9" height="8"><circle cx="4.5" cy="4" r="2.5" fill="none" stroke="#3050a0" stroke-width="0.9"/></svg>
<svg class="a" style="left:272.7px;top:94.5px" width="9" height="8"><path d="M1.5 4H7.5" stroke="#b8b8c0" stroke-width="1"/></svg>
<svg class="a" style="left:272.7px;top:104.3px" width="9" height="8"><path d="M1.2 6.2L2.8 1.8H8.2L6.6 6.2Z" fill="#f4f4e4" stroke="#1a2010" stroke-width="0.9"/></svg>
<svg class="a" style="left:272.7px;top:115.2px" width="9" height="8"><path d="M1.2 6.2L2.8 1.8H8.2L6.6 6.2Z" fill="#f4f4e4" stroke="#1a2010" stroke-width="0.8" stroke-dasharray="2.5,1"/></svg>
<svg class="a" style="left:272.7px;top:127.69999999999999px" width="9" height="8"><path d="M1.2 6.2L2.8 1.8H8.2L6.6 6.2Z" fill="#f0e860" stroke="#1a2010" stroke-width="0.9"/></svg>
<svg class="a" style="left:272.7px;top:139px" width="9" height="8"><path d="M1.3 6.2L2.9 1.8H8.1L6.5 6.2Z" fill="#e8e8d8" stroke="#000" stroke-width="1.4"/></svg>
<svg class="a" style="left:272.7px;top:150.5px" width="9" height="8"><path d="M1.5 7V3.5L4.5 0.8L7.5 3.5V7Z" fill="#e8f0d0" stroke="#1a2010" stroke-width="0.9"/></svg>
<svg class="a" style="left:272.7px;top:163px" width="9" height="8"><ellipse cx="4.5" cy="4" rx="3.2" ry="2.1" fill="#e8f0d0" stroke="#1a2010" stroke-width="1.2"/></svg>
<svg class="a" style="left:272.7px;top:175px" width="9" height="8"><path d="M1 4L2.5 2H6.5L8 4L6.5 6H2.5Z" fill="#e8f0d0" stroke="#1a2010" stroke-width="0.8"/></svg>
<svg class="a" style="left:272.7px;top:186.2px" width="9" height="8"><rect x="1.2" y="1.8" width="6.6" height="4.4" rx="1" fill="#e8f0d0" stroke="#1a2010" stroke-width="0.9"/></svg>
<svg class="a" style="left:272.7px;top:197px" width="9" height="8"><rect x="1.2" y="1.8" width="6.6" height="4.4" rx="1.8" fill="#e8f0d0" stroke="#1a2010" stroke-width="0.9"/></svg>
<svg class="a" style="left:272.7px;top:210px" width="9" height="8"><path d="M4.5 1.5L8 4L4.5 6.5L1 4Z" fill="#e8f0d0" stroke="#1a2010" stroke-width="0.9"/></svg>
<svg class="a" style="left:272.7px;top:218.2px" width="9" height="8"><path d="M2 4H7" stroke="#b8b8c8" stroke-width="0.9"/></svg>
<svg class="a" style="left:272.7px;top:228px" width="9" height="8"><circle cx="1.8" cy="4" r="1.3" fill="#fff" stroke="#1a2010" stroke-width="0.9"/><circle cx="7.2" cy="4" r="1.3" fill="#fff" stroke="#1a2010" stroke-width="0.9"/><path d="M3.1 4H5.9" stroke="#1a2010" stroke-width="0.9"/></svg>
<svg class="a" style="left:272.7px;top:240.4px" width="9" height="8"><path d="M5.5 0.8L3.5 3.8L5.5 4.2L3.5 7.2" stroke="#e02020" stroke-width="1" fill="none"/><path d="M1 4.5H8.2" stroke="#1a2010" stroke-width="0.9"/></svg>
<svg class="a" style="left:272.7px;top:252.8px" width="9" height="8"><path d="M0.8 6L2 4H4.5L5 6Z" fill="#1a2010"/><path d="M1.5 4.2C2 2.5 4 2.2 5.5 3.5" fill="none" stroke="#1a2010" stroke-width="0.9"/><circle cx="7" cy="4.5" r="1.3" fill="#fff" stroke="#1a2010" stroke-width="0.9"/></svg>
<svg class="a" style="left:272.7px;top:264.2px" width="9" height="8"><circle cx="2" cy="4" r="1.6" fill="#fff" stroke="#1a2010" stroke-width="1"/><circle cx="7.2" cy="4" r="1.2" fill="#fff" stroke="#1a2010" stroke-width="0.9"/><path d="M3.6 4H6" stroke="#1a2010" stroke-width="0.9"/></svg>
<svg class="a" style="left:272.7px;top:273.5px" width="9" height="8"><path d="M2 4H7" stroke="#b8b8c8" stroke-width="0.9"/></svg>
<svg class="a" style="left:272.7px;top:283.6px" width="9" height="8"><path d="M4.5 0V1.5" stroke="#1a2010" stroke-width="0.8"/><circle cx="4.5" cy="3" r="1.5" fill="#f0e070" stroke="#1a2010" stroke-width="0.8"/><path d="M4.5 4.5L1.5 7.5M4.5 4.5L7.5 7.5" stroke="#1a2010" stroke-width="0.9" fill="none"/></svg>
<svg class="a" style="left:272.7px;top:294.5px" width="9" height="8"><path d="M4.5 0V8" stroke="#1a2010" stroke-width="0.8"/><circle cx="4.5" cy="4" r="2" fill="#d8a8c8" stroke="#703060" stroke-width="0.9"/></svg>
<svg class="a" style="left:272.7px;top:305.8px" width="9" height="8"><path d="M4.5 0V8" stroke="#1a2010" stroke-width="0.8"/><circle cx="4.5" cy="4" r="2" fill="#c86080" stroke="#702040" stroke-width="0.9"/></svg>
<svg class="a" style="left:272.7px;top:318.4px" width="9" height="8"><path d="M4.5 0V1.5" stroke="#1a2010" stroke-width="0.8"/><circle cx="4.5" cy="3" r="1.5" fill="#fff" stroke="#1a2010" stroke-width="0.8"/><path d="M4.5 4.5L1.5 7.5M4.5 4.5L7.5 7.5" stroke="#1a2010" stroke-width="0.9" fill="none"/></svg>
<div class="a" style="left:287px;top:35.8px;width:372.3px;height:222.8px;background:#0f4a72;"></div>
<div class="a" style="left:289.3px;top:39.2px;width:370px;height:10.5px;background-color:#a4d0f2;background-image:linear-gradient(45deg,#bcdcf8 25%,transparent 25%,transparent 75%,#bcdcf8 75%),linear-gradient(45deg,#bcdcf8 25%,transparent 25%,transparent 75%,#bcdcf8 75%);background-size:2px 2px;background-position:0 0,1px 1px;"></div>
<svg class="a" style="left:292px;top:40.3px" width="8" height="9"><rect x="0.5" y="0.5" width="6" height="7.5" fill="#f0f0d8" stroke="#222" stroke-width="0.9"/><path d="M2.3 2V6.5M2.3 2H4.2" stroke="#3a3a1a" stroke-width="0.9"/><path d="M1.5 8.3H7.5" stroke="#000" stroke-width="0.9"/></svg>
<div class="t" style="left:302.8px;top:41.46px;font-size:5.73px;line-height:6.88px;color:#000;-webkit-text-stroke:0.18px #000;">(Goal) Learning efficiently organised&nbsp; AB-F1</div>
<svg class="a" style="left:651px;top:40.5px" width="8" height="8"><rect x="0.8" y="3.5" width="3.5" height="3.5" fill="none" stroke="#0a2a5a" stroke-width="1"/><path d="M3.5 4L7 0.8M5 0.8H7.2V3" stroke="#0a2a5a" stroke-width="1" fill="none"/></svg>
<div class="a" style="left:289.3px;top:49.7px;width:370px;height:199px;background-color:#3c8ebe;background-image:radial-gradient(circle,#2a6c98 0.5px,transparent 0.85px);background-size:5.4px 5.4px;background-position:1px 2px;"></div>
<div class="a" style="left:289.3px;top:248.6px;width:370px;height:8px;background:#6ea6dc;background-image:radial-gradient(#86b8e8 35%,transparent 40%);background-size:2px 2px;"></div>
<div class="a" style="left:290px;top:248.8px;width:8.2px;height:7.4px;background:#d4d2ce;border:1px solid;border-color:#fff #808080 #808080 #fff;"></div>
<svg class="a" style="left:292.3px;top:250.5px" width="5" height="5"><path d="M3.8 0.3V4.3L0.8 2.3Z" fill="#000"/></svg>
<div class="a" style="left:298.2px;top:248.8px;width:43px;height:7.4px;background:#d8d8d8;border:1px solid;border-color:#f8f8f8 #909090 #909090 #f8f8f8;"></div>
<div class="a" style="left:643.6px;top:248.8px;width:16px;height:7.4px;background:#d4d2ce;"></div>
<svg class="a" style="left:0;top:0" width="765" height="460"><g stroke="#0a2438" stroke-width="1" fill="none"><line x1="489" y1="117" x2="492.6" y2="88"/><line x1="489" y1="117" x2="396" y2="133"/><line x1="489" y1="117" x2="434" y2="185"/><line x1="489" y1="117" x2="527" y2="210"/><line x1="489" y1="117" x2="591.4" y2="164"/><line x1="367.4" y1="145" x2="421" y2="185"/></g><polygon points="448,73.7 545.8,73.7 539.2,85.2 442.3,85.2" fill="#e4eef6" stroke="#0c2a40" stroke-width="0.9" /><polygon points="300.7,133.4 428.3,133.4 415.7,145.2 289.7,145.2" fill="#e4eef6" stroke="#0c2a40" stroke-width="0.9" /><polygon points="392.4,185.4 478.2,185.4 469.5,197.8 384.5,197.8" fill="#e4eef6" stroke="#0c2a40" stroke-width="0.9" stroke-dasharray="2,1"/><polygon points="559.7,164.1 653.6,164.1 647.7,175.4 553.8,175.4" fill="#e4eef6" stroke="#0c2a40" stroke-width="0.9" /><polygon points="486.8,209.7 578.5,209.7 571.3,221.2 480.1,221.2" fill="#e4eef6" stroke="#0c2a40" stroke-width="0.9" /><path d="M490.5 90.5L492.8 85.8L495 90.5Z" fill="#f0e040" stroke="#203040" stroke-width="0.7"/><circle cx="489" cy="117" r="3.6" fill="#f8e020" stroke="#504010" stroke-width="0.8"/><path d="M401 162L394.8 166.3L398.3 168.6L389 174.2L394.6 169.6L391 167.4Z" fill="#d41c1c" stroke="#14203c" stroke-width="0.9" stroke-linejoin="round"/><rect x="381.0" y="183.1" width="2.6" height="2.6" fill="#a8c8f0" stroke="#3060a0" stroke-width="0.5"/><rect x="381.0" y="189.7" width="2.6" height="2.6" fill="#a8c8f0" stroke="#3060a0" stroke-width="0.5"/><rect x="381.0" y="196.2" width="2.6" height="2.6" fill="#a8c8f0" stroke="#3060a0" stroke-width="0.5"/><rect x="428.7" y="183.1" width="2.6" height="2.6" fill="#a8c8f0" stroke="#3060a0" stroke-width="0.5"/><rect x="428.7" y="196.2" width="2.6" height="2.6" fill="#a8c8f0" stroke="#3060a0" stroke-width="0.5"/><rect x="476.2" y="183.1" width="2.6" height="2.6" fill="#a8c8f0" stroke="#3060a0" stroke-width="0.5"/><rect x="476.2" y="189.7" width="2.6" height="2.6" fill="#a8c8f0" stroke="#3060a0" stroke-width="0.5"/><rect x="476.2" y="196.2" width="2.6" height="2.6" fill="#a8c8f0" stroke="#3060a0" stroke-width="0.5"/></svg>
<div class="t" style="left:394px;width:200px;text-align:center;top:76.59px;font-size:5.35px;line-height:6.42px;color:#000;letter-spacing:0.18px;-webkit-text-stroke:0.2px #000;">Learning efficiently organised</div>
<div class="t" style="left:258.5px;width:200px;text-align:center;top:136.39px;font-size:5.35px;line-height:6.42px;color:#000;letter-spacing:0.18px;-webkit-text-stroke:0.2px #000;">Attractive learning environment provided</div>
<div class="t" style="left:330px;width:200px;text-align:center;top:189.19px;font-size:5.35px;line-height:6.42px;color:#000;letter-spacing:0.1px;-webkit-text-stroke:0.2px #000;">Education costs minimised</div>
<div class="t" style="left:503.5px;width:200px;text-align:center;top:166.79px;font-size:5.35px;line-height:6.42px;color:#000;letter-spacing:0.18px;-webkit-text-stroke:0.2px #000;">Trainee knowledge improved</div>
<div class="t" style="left:429px;width:200px;text-align:center;top:212.49px;font-size:5.35px;line-height:6.42px;color:#000;letter-spacing:0.18px;-webkit-text-stroke:0.2px #000;">Quality of learning improved</div>
<div class="a" style="left:287px;top:257px;width:372.7px;height:131.6px;background:#383838;"></div>
<div class="a" style="left:287px;top:257px;width:372.7px;height:2.4px;background:#0f4a72;"></div>
<div class="a" style="left:289px;top:258.9px;width:370.5px;height:8.2px;background:#c8c6c2;"></div>
<svg class="a" style="left:292.5px;top:259.3px" width="8" height="8"><rect x="0.5" y="0.5" width="5.5" height="6.5" fill="#e0e0e0" stroke="#222" stroke-width="0.9"/><path d="M2 2V5.5M2 2H4" stroke="#222" stroke-width="0.8"/><path d="M1.5 7.5H7" stroke="#000" stroke-width="0.9"/></svg>
<div class="t" style="left:302.8px;top:259.82px;font-size:5.64px;line-height:6.77px;color:#303030;">E-learning&nbsp; AB-F2</div>
<svg class="a" style="left:650px;top:259.5px" width="7" height="7"><rect x="0.8" y="2.5" width="3.8" height="3.8" fill="none" stroke="#333" stroke-width="0.9"/><path d="M3.8 2.8L6.3 0.6" stroke="#333" stroke-width="0.9"/></svg>
<div class="a" style="left:289px;top:267.1px;width:370.5px;height:15.2px;background:#d0ceca;"></div>
<div class="a" style="left:290.9px;top:268.9px;width:10.900000000000034px;height:11.5px;background:radial-gradient(ellipse at 50% 50%,#dce6c8 45%,#a8b494 100%);border-radius:4px;"></div>
<div class="t" style="left:196.35000000000002px;width:200px;text-align:center;top:268.00px;font-size:11px;line-height:13.20px;color:#000;font-weight:bold;font-family:'Liberation Sans';">b</div>
<div class="a" style="left:303.7px;top:268.9px;width:11.900000000000034px;height:11.5px;background:radial-gradient(ellipse at 50% 50%,#dce6c8 45%,#a8b494 100%);border-radius:4px;"></div>
<div class="t" style="left:209.64999999999998px;width:200px;text-align:center;top:268.00px;font-size:11px;line-height:13.20px;color:#000;font-style:italic;font-weight:bold;font-family:'Liberation Serif';">i</div>
<div class="a" style="left:317.9px;top:268.9px;width:12.300000000000011px;height:11.5px;background:radial-gradient(ellipse at 50% 50%,#dce6c8 45%,#a8b494 100%);border-radius:4px;"></div>
<div class="t" style="left:224.04999999999995px;width:200px;text-align:center;top:268.00px;font-size:11px;line-height:13.20px;color:#000;font-family:'Liberation Sans';">u</div>
<div class="a" style="left:330.7px;top:268.4px;width:309px;height:12.6px;background:#fff;border-top:0.8px solid #909090;"></div>
<div class="t" style="left:331.6px;top:271.72px;font-size:5.63px;line-height:6.76px;color:#111;">default</div>
<div class="a" style="left:639.6px;top:268.9px;width:11px;height:11.5px;background:#d4d2ce;border:1px solid;border-color:#f8f8f8 #909090 #909090 #f8f8f8;"></div>
<svg class="a" style="left:642px;top:272.5px" width="6" height="4"><path d="M0.3 0.3H5.5L2.9 3.5Z" fill="#000"/></svg>
<div class="a" style="left:651px;top:268.9px;width:8.5px;height:11.5px;background:#d4d2ce;border:1px solid;border-color:#f8f8f8 #909090 #909090 #f8f8f8;"></div>
<div class="a" style="left:289px;top:282.2px;width:370.5px;height:90px;background:#fff;"></div>
<div class="t" style="left:291.8px;top:291.70px;font-size:6.33px;line-height:7.60px;color:#303030;-webkit-text-stroke:0;">Cediti : Nicolas and Xavier</div>
<div class="t" style="left:291.8px;top:309.00px;font-size:6.33px;line-height:7.60px;color:#000;font-weight:bold;">Summary</div>
<div class="t" style="left:291.8px;top:326.26px;font-size:6.4px;line-height:7.68px;color:#303030;-webkit-text-stroke:0;">To obtain a <span style="font-weight:bold;text-decoration:underline;color:#000;letter-spacing:-0.08px;-webkit-text-stroke:0.1px #000;">Learning efficiently organised </span>, we need to establish different achievements due to technical constraints.</div>
<div class="t" style="left:291.8px;top:335.46px;font-size:6.4px;line-height:7.68px;color:#303030;-webkit-text-stroke:0;">Apart from this, Robert mentioned a very important topic about an <span style="font-weight:bold;text-decoration:underline;color:#000;letter-spacing:-0.08px;-webkit-text-stroke:0.1px #000;">Author environment easy to use</span> and an</div>
<div class="t" style="left:293px;top:343.76px;font-size:6.4px;line-height:7.68px;color:#202020;"><span style="font-weight:bold;text-decoration:underline;color:#000;letter-spacing:-0.08px;-webkit-text-stroke:0.1px #000;">User interface easy to use</span>.</div>
<div class="t" style="left:291.8px;top:351.56px;font-size:6.4px;line-height:7.68px;color:#303030;-webkit-text-stroke:0;">Last year, we have reached the following objectives :</div>
<div class="t" style="left:291.8px;top:360.26px;font-size:6.4px;line-height:7.68px;color:#202020;"><span style="font-weight:bold;text-decoration:underline;color:#000;letter-spacing:-0.08px;-webkit-text-stroke:0.1px #000;">Quality of learning improved</span></div>
<div class="a" style="left:289px;top:372px;width:370.5px;height:15.2px;background:#d4d2ce;"></div>
<div class="a" style="left:290px;top:372.5px;width:130.7px;height:14px;background:#d4d2ce;border:1px solid;border-color:#f0f0f0 #a0a0a0 #a0a0a0 #f0f0f0;"></div>
<div class="a" style="left:553.9px;top:372.5px;width:105.5px;height:14px;background:#d4d2ce;border:1px solid;border-color:#f0f0f0 #a0a0a0 #a0a0a0 #f0f0f0;"></div>
<svg class="a" style="left:328.5px;top:374px" width="13" height="11"><path d="M1 10L3.5 7.5L5 8.5L6.5 6.5L8.5 7L9 5L7.5 4L9.5 1.5L11 2.5L10 5L11.5 6.5" stroke="#8e8e8e" stroke-width="1.6" fill="none" stroke-linejoin="round"/><circle cx="10.2" cy="1.6" r="1.4" fill="#909090"/><path d="M1.5 8.5L3 10" stroke="#b8b8b8" stroke-width="1.2"/></svg>
<div class="t" style="left:342.7px;top:376.84px;font-size:5.6px;line-height:6.72px;color:#8c8c8c;text-shadow:0.6px 0.6px 0 #f4f4f4;">Create concept</div>
<svg class="a" style="left:598.5px;top:374px" width="13" height="11"><path d="M1 10L3.5 7.5L5 8.5L6.5 6.5L8.5 7L9 5L7.5 4L9.5 1.5L11 2.5L10 5L11.5 6.5" stroke="#8e8e8e" stroke-width="1.6" fill="none" stroke-linejoin="round"/><circle cx="10.2" cy="1.6" r="1.4" fill="#909090"/><path d="M1.5 8.5L3 10" stroke="#b8b8b8" stroke-width="1.2"/></svg>
<div class="t" style="left:612.3px;top:376.75px;font-size:5.75px;line-height:6.90px;color:#8c8c8c;text-shadow:0.6px 0.6px 0 #f4f4f4;">Reference</div>
<svg class="a" style="left:289px;top:389.5px" width="12" height="4"><path d="M0.5 3.5L2.3 1L4.1 3.5Z" fill="#1a2234"/><path d="M5.5 1L7.3 3.5L9.1 1Z" fill="#1a2234"/></svg>
<div class="a" style="left:124px;top:394px;width:535.5px;height:1px;background:#b0aca6;"></div>
<div class="a" style="left:124px;top:395px;width:535.5px;height:1px;background:#f4f4f4;"></div>
<div class="a" style="left:125.5px;top:396.5px;width:424px;height:10.5px;background:#d0d4d6;border:1px solid;border-color:#6a8496 #b8c8d4 #7890a0 #6a8496;"></div>
<div class="a" style="left:552.3px;top:396.8px;width:41.3px;height:10.2px;background:#d0d4d6;border:1px solid;border-color:#6a8496 #b8c8d4 #7890a0 #6a8496;"></div>
<div class="t" style="left:562px;top:398.84px;font-size:5.6px;line-height:6.72px;color:#1a4a8c;-webkit-text-stroke:0;">Modified</div>
<div class="a" style="left:596px;top:396.8px;width:52.7px;height:10.2px;background:#d0d4d6;border:1px solid;border-color:#6a8496 #b8c8d4 #7890a0 #6a8496;"></div>
<div class="a" style="left:597px;top:397.8px;width:43px;height:8.2px;background:#1e76c4;"></div>
<div class="t" style="left:607.8px;top:398.60px;font-size:6.0px;line-height:7.20px;color:#fff;-webkit-text-stroke:0;">45M of 54M</div>
<svg class="a" style="left:649.5px;top:398px" width="9" height="8"><path d="M1 3.5H8L6.5 7H2.5Z" fill="#e8e0b0" stroke="#1a1a1a" stroke-width="0.9"/><path d="M2 3L4.5 0.8L7 3" fill="#1a1a1a" stroke="#1a1a1a" stroke-width="0.8"/></svg>
<div class="a" style="left:124px;top:407.2px;width:535.5px;height:5.8px;background:#dcd8d2;"></div>

<div class="ann" style="left:25px;top:66.9px;">Indexes</div>
<div class="a" style="left:104.5px;top:23px;width:1.6px;height:207px;background:#b41f26;"></div>
<div class="a" style="left:92px;top:76.3px;width:13px;height:1.4px;background:#b41f26;"></div>
<div class="ann" style="left:8px;top:246.3px;">Property</div>
<div class="ann" style="left:8px;top:270.3px;">viewer</div>
<div class="ann" style="left:683px;top:43px;">Diagram</div>
<div class="ann" style="left:683px;top:67px;">viewer</div>
<div class="ann" style="left:684px;top:253.2px;">Text</div>
<div class="ann" style="left:684px;top:277.6px;">viewer</div>
<div class="ann" style="left:295px;top:433px;">Concept references are hyperlinks.</div>
<svg class="a" style="left:0;top:0" width="765" height="460">
<g stroke="#b41f26" stroke-width="1.3" fill="none">
<line x1="72" y1="278" x2="118" y2="291"/>
<line x1="617" y1="76" x2="676.5" y2="63"/>
<line x1="624" y1="285" x2="683" y2="271"/>
<line x1="492.4" y1="345.6" x2="498.7" y2="425.3"/>
</g></svg>

</body></html>
